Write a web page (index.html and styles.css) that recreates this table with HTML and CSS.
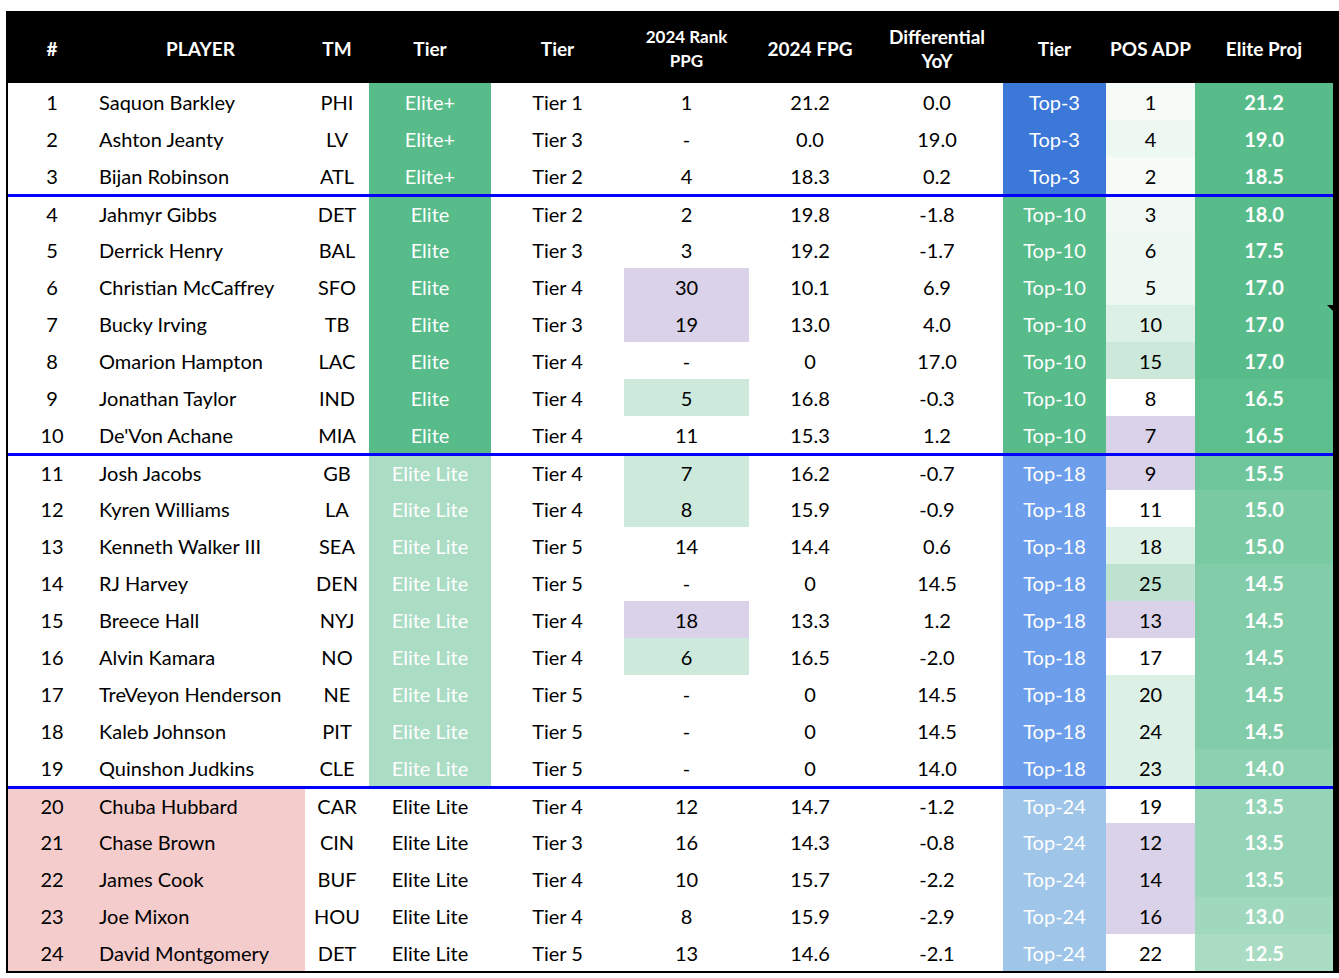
FILE: index.html
```html
<!DOCTYPE html>
<html lang="en">
<head>
<meta charset="utf-8">
<title>RB Tiers</title>
<link rel="stylesheet" href="styles.css">
</head>
<body>
<table class="sheet">
  <colgroup>
    <col class="c-num"><col class="c-player"><col class="c-tm"><col class="c-tier"><col class="c-tier2"><col class="c-rank"><col class="c-fpg"><col class="c-diff"><col class="c-top"><col class="c-adp"><col class="c-proj">
  </colgroup>
  <thead>
    <tr>
      <th>#</th><th>PLAYER</th><th>TM</th><th>Tier</th><th>Tier</th>
      <th class="small">2024 Rank<br>PPG</th><th>2024 FPG</th><th>Differential<br>YoY</th>
      <th>Tier</th><th>POS ADP</th><th>Elite Proj</th>
    </tr>
  </thead>
  <tbody>
    <tr><td>1</td><td class="name">Saquon Barkley</td><td>PHI</td><td class="elite">Elite+</td><td>Tier 1</td><td>1</td><td>21.2</td><td>0.0</td><td class="top3">Top-3</td><td class="adp-1">1</td><td class="proj p1">21.2</td></tr>
    <tr><td>2</td><td class="name">Ashton Jeanty</td><td>LV</td><td class="elite">Elite+</td><td>Tier 3</td><td>-</td><td>0.0</td><td>19.0</td><td class="top3">Top-3</td><td class="adp-3">4</td><td class="proj p1">19.0</td></tr>
    <tr><td>3</td><td class="name">Bijan Robinson</td><td>ATL</td><td class="elite">Elite+</td><td>Tier 2</td><td>4</td><td>18.3</td><td>0.2</td><td class="top3">Top-3</td><td class="adp-1">2</td><td class="proj p1">18.5</td></tr>
    <tr class="group"><td>4</td><td class="name">Jahmyr Gibbs</td><td>DET</td><td class="elite">Elite</td><td>Tier 2</td><td>2</td><td>19.8</td><td>-1.8</td><td class="top10">Top-10</td><td class="adp-2">3</td><td class="proj p1">18.0</td></tr>
    <tr><td>5</td><td class="name">Derrick Henry</td><td>BAL</td><td class="elite">Elite</td><td>Tier 3</td><td>3</td><td>19.2</td><td>-1.7</td><td class="top10">Top-10</td><td class="adp-3">6</td><td class="proj p1">17.5</td></tr>
    <tr><td>6</td><td class="name">Christian McCaffrey</td><td>SFO</td><td class="elite">Elite</td><td>Tier 4</td><td class="purple">30</td><td>10.1</td><td>6.9</td><td class="top10">Top-10</td><td class="adp-3">5</td><td class="proj p1">17.0</td></tr>
    <tr><td>7</td><td class="name">Bucky Irving</td><td>TB</td><td class="elite">Elite</td><td>Tier 3</td><td class="purple">19</td><td>13.0</td><td>4.0</td><td class="top10">Top-10</td><td class="adp-4">10</td><td class="proj p1 has-note"><span class="note"></span>17.0</td></tr>
    <tr><td>8</td><td class="name">Omarion Hampton</td><td>LAC</td><td class="elite">Elite</td><td>Tier 4</td><td>-</td><td>0</td><td>17.0</td><td class="top10">Top-10</td><td class="adp-5">15</td><td class="proj p1">17.0</td></tr>
    <tr><td>9</td><td class="name">Jonathan Taylor</td><td>IND</td><td class="elite">Elite</td><td>Tier 4</td><td class="mint">5</td><td>16.8</td><td>-0.3</td><td class="top10">Top-10</td><td>8</td><td class="proj p2">16.5</td></tr>
    <tr><td>10</td><td class="name">De'Von Achane</td><td>MIA</td><td class="elite">Elite</td><td>Tier 4</td><td>11</td><td>15.3</td><td>1.2</td><td class="top10">Top-10</td><td class="purple">7</td><td class="proj p2">16.5</td></tr>
    <tr class="group"><td>11</td><td class="name">Josh Jacobs</td><td>GB</td><td class="lite">Elite Lite</td><td>Tier 4</td><td class="mint">7</td><td>16.2</td><td>-0.7</td><td class="top18">Top-18</td><td class="purple">9</td><td class="proj p3">15.5</td></tr>
    <tr><td>12</td><td class="name">Kyren Williams</td><td>LA</td><td class="lite">Elite Lite</td><td>Tier 4</td><td class="mint">8</td><td>15.9</td><td>-0.9</td><td class="top18">Top-18</td><td>11</td><td class="proj p4">15.0</td></tr>
    <tr><td>13</td><td class="name">Kenneth Walker III</td><td>SEA</td><td class="lite">Elite Lite</td><td>Tier 5</td><td>14</td><td>14.4</td><td>0.6</td><td class="top18">Top-18</td><td class="adp-4">18</td><td class="proj p4">15.0</td></tr>
    <tr><td>14</td><td class="name">RJ Harvey</td><td>DEN</td><td class="lite">Elite Lite</td><td>Tier 5</td><td>-</td><td>0</td><td>14.5</td><td class="top18">Top-18</td><td class="adp-6">25</td><td class="proj p5">14.5</td></tr>
    <tr><td>15</td><td class="name">Breece Hall</td><td>NYJ</td><td class="lite">Elite Lite</td><td>Tier 4</td><td class="purple">18</td><td>13.3</td><td>1.2</td><td class="top18">Top-18</td><td class="purple">13</td><td class="proj p5">14.5</td></tr>
    <tr><td>16</td><td class="name">Alvin Kamara</td><td>NO</td><td class="lite">Elite Lite</td><td>Tier 4</td><td class="mint">6</td><td>16.5</td><td>-2.0</td><td class="top18">Top-18</td><td>17</td><td class="proj p5">14.5</td></tr>
    <tr><td>17</td><td class="name">TreVeyon Henderson</td><td>NE</td><td class="lite">Elite Lite</td><td>Tier 5</td><td>-</td><td>0</td><td>14.5</td><td class="top18">Top-18</td><td class="adp-4">20</td><td class="proj p5">14.5</td></tr>
    <tr><td>18</td><td class="name">Kaleb Johnson</td><td>PIT</td><td class="lite">Elite Lite</td><td>Tier 5</td><td>-</td><td>0</td><td>14.5</td><td class="top18">Top-18</td><td class="adp-4">24</td><td class="proj p5">14.5</td></tr>
    <tr><td>19</td><td class="name">Quinshon Judkins</td><td>CLE</td><td class="lite">Elite Lite</td><td>Tier 5</td><td>-</td><td>0</td><td>14.0</td><td class="top18">Top-18</td><td class="adp-4">23</td><td class="proj p6">14.0</td></tr>
    <tr class="group"><td class="pink">20</td><td class="name pink">Chuba Hubbard</td><td>CAR</td><td>Elite Lite</td><td>Tier 4</td><td>12</td><td>14.7</td><td>-1.2</td><td class="top24">Top-24</td><td>19</td><td class="proj p7">13.5</td></tr>
    <tr><td class="pink">21</td><td class="name pink">Chase Brown</td><td>CIN</td><td>Elite Lite</td><td>Tier 3</td><td>16</td><td>14.3</td><td>-0.8</td><td class="top24">Top-24</td><td class="purple">12</td><td class="proj p7">13.5</td></tr>
    <tr><td class="pink">22</td><td class="name pink">James Cook</td><td>BUF</td><td>Elite Lite</td><td>Tier 4</td><td>10</td><td>15.7</td><td>-2.2</td><td class="top24">Top-24</td><td class="purple">14</td><td class="proj p7">13.5</td></tr>
    <tr><td class="pink">23</td><td class="name pink">Joe Mixon</td><td>HOU</td><td>Elite Lite</td><td>Tier 4</td><td>8</td><td>15.9</td><td>-2.9</td><td class="top24">Top-24</td><td class="purple">16</td><td class="proj p8">13.0</td></tr>
    <tr><td class="pink">24</td><td class="name pink">David Montgomery</td><td>DET</td><td>Elite Lite</td><td>Tier 5</td><td>13</td><td>14.6</td><td>-2.1</td><td class="top24">Top-24</td><td>22</td><td class="proj p9">12.5</td></tr>
  </tbody>
</table>
</body>
</html>
```

FILE: styles.css
```css
html, body {
  margin: 0;
  padding: 0;
  background: #ffffff;
}

body {
  padding: 11px 0 0 6px;
  font-family: Lato, "Liberation Sans", sans-serif;
  color: #000000;
}

.sheet {
  table-layout: fixed;
  border-collapse: separate;
  border-spacing: 0;
  width: 1333px;
  border-left: 2px solid #000;
  border-right: 6px solid #000;
  border-bottom: 2px solid #000;
}

.c-num { width: 88px; }
.c-player { width: 209px; }
.c-tm { width: 64px; }
.c-tier { width: 122px; }
.c-tier2 { width: 133px; }
.c-rank { width: 125px; }
.c-fpg { width: 122px; }
.c-diff { width: 132px; }
.c-top { width: 103px; }
.c-adp { width: 89px; }
.c-proj { width: 138px; }

thead tr {
  height: 72px;
  background: #000;
}

th {
  color: #ffffff;
  font-weight: 700;
  font-size: 19px;
  line-height: 24px;
  padding: 3px 0 0 0;
  text-align: center;
  vertical-align: middle;
  white-space: nowrap;
}

th.small {
  font-size: 17px;
}

tbody tr {
  height: 37px;
}

td {
  padding: 0;
  font-size: 20px;
  text-align: center;
  vertical-align: middle;
  white-space: nowrap;
  line-height: 20px;
}

td.name {
  text-align: left;
  padding-left: 3px;
}

tr.group td {
  border-top: 3px solid #0000ff;
}

.elite { background: #57bb8a; color: #ffffff; }
.lite { background: #abdcc4; color: #ffffff; }

.top3 { background: #3c78d8; color: #ffffff; }
.top10 { background: #57bb8a; color: #ffffff; }
.top18 { background: #6d9eeb; color: #ffffff; }
.top24 { background: #9fc5e8; color: #ffffff; }

.pink { background: #f4cccc; }
.purple { background: #d9d2e9; }
.mint { background: #cde9db; }

.adp-1 { background: #f6fbf8; }
.adp-2 { background: #f2f9f5; }
.adp-3 { background: #eef8f3; }
.adp-4 { background: #ddf0e6; }
.adp-5 { background: #cce8da; }
.adp-6 { background: #bde2cf; }

.proj { color: #ffffff; font-weight: 700; }
.p1 { background: #57bb8a; }
.p2 { background: #5dbe8e; }
.p3 { background: #6fc59c; }
.p4 { background: #79c9a3; }
.p5 { background: #82cca9; }
.p6 { background: #8bd0af; }
.p7 { background: #95d4b6; }
.p8 { background: #9fd8bc; }
.p9 { background: #a9dcc3; }

.has-note { position: relative; }

.note {
  position: absolute;
  top: 0;
  right: 0;
  width: 0;
  height: 0;
  border-top: 6px solid #000;
  border-left: 6px solid transparent;
}
```
